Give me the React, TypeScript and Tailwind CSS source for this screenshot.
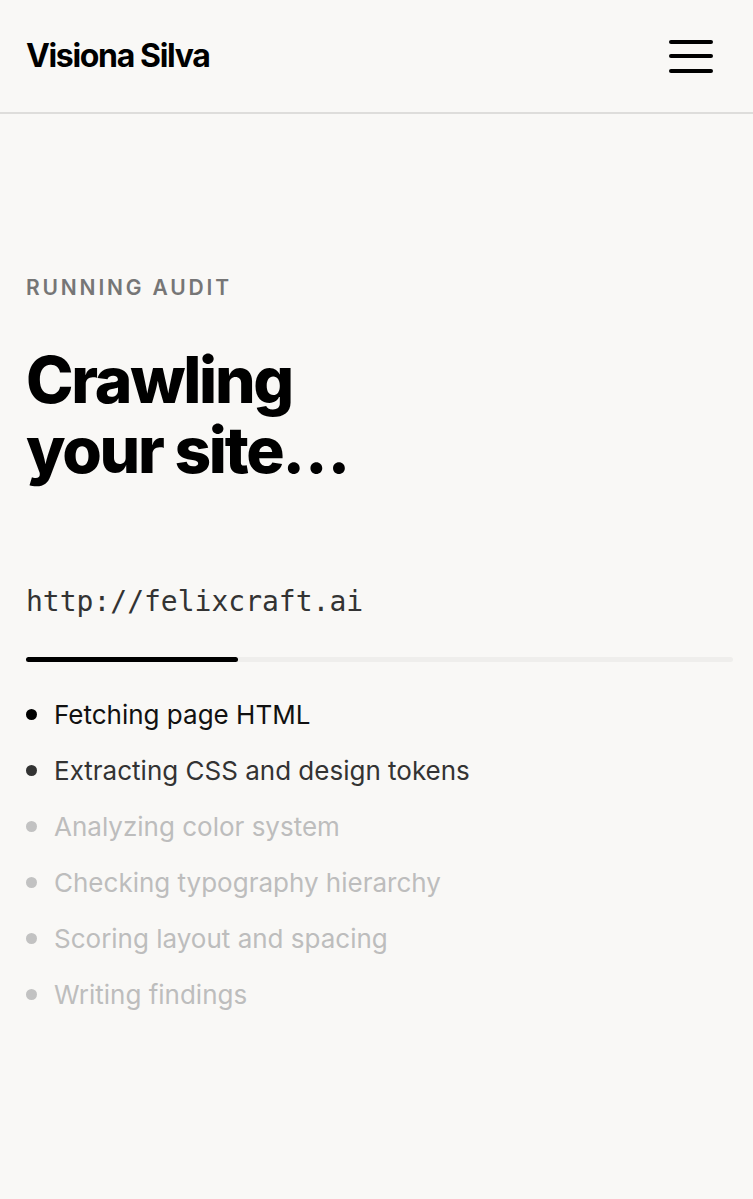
const steps = [
  { label: "Fetching page HTML", state: "done" },
  { label: "Extracting CSS and design tokens", state: "active" },
  { label: "Analyzing color system", state: "todo" },
  { label: "Checking typography hierarchy", state: "todo" },
  { label: "Scoring layout and spacing", state: "todo" },
  { label: "Writing findings", state: "todo" },
];

export default function App() {
  return (
    <div
      className="min-h-[1199px] w-full bg-[#f9f8f6] text-black"
      style={{ fontFamily: "Inter, 'Noto Sans', sans-serif" }}
    >
      <header className="h-[114px] flex items-center justify-between pl-[26px] pr-[40px] border-b-2 border-[#dedddb]">
        <span className="text-[32px] font-bold tracking-[-0.042em]">Visiona Silva</span>
        <button className="w-[44px] h-[33px] flex flex-col justify-between" aria-label="Menu">
          <span className="block h-[4px] w-full rounded-full bg-black" />
          <span className="block h-[4px] w-full rounded-full bg-black" />
          <span className="block h-[4px] w-full rounded-full bg-black" />
        </button>
      </header>

      <main className="px-[26px] pt-[162px]">
        <p className="text-[21px] font-semibold tracking-[0.135em] text-[#767676] leading-[24px]">
          RUNNING AUDIT
        </p>
        <h1 className="mt-[45px] text-[64px] font-extrabold leading-[70px] tracking-[-0.035em]">
          Crawling
          <br />
          your site…
        </h1>

        <p
          className="mt-[100px] text-[28px] leading-[34px] text-[#333]"
          style={{ fontFamily: "'DejaVu Sans Mono', monospace" }}
        >
          http://felixcraft.ai
        </p>

        <div className="mt-[38px] mr-[-6px] h-[5px] rounded-full bg-[#efeeec]">
          <div className="h-full w-[30%] rounded-full bg-black" />
        </div>

        <ul className="mt-[36px] flex flex-col gap-[24px]">
          {steps.map((s) => (
            <li key={s.label} className="flex items-center gap-[17px] h-[32px]">
              <span
                className={
                  s.state === "done"
                    ? "w-[11px] h-[11px] rounded-full bg-black"
                    : s.state === "active"
                    ? "w-[11px] h-[11px] rounded-full bg-[#333]"
                    : "w-[11px] h-[11px] rounded-full bg-[#c2c2c2]"
                }
              />
              <span
                className={
                  s.state === "done"
                    ? "text-[26px] text-[#111]"
                    : s.state === "active"
                    ? "text-[26px] text-[#333]"
                    : "text-[26px] text-[#bdbdbd]"
                }
              >
                {s.label}
              </span>
            </li>
          ))}
        </ul>
      </main>
    </div>
  );
}
